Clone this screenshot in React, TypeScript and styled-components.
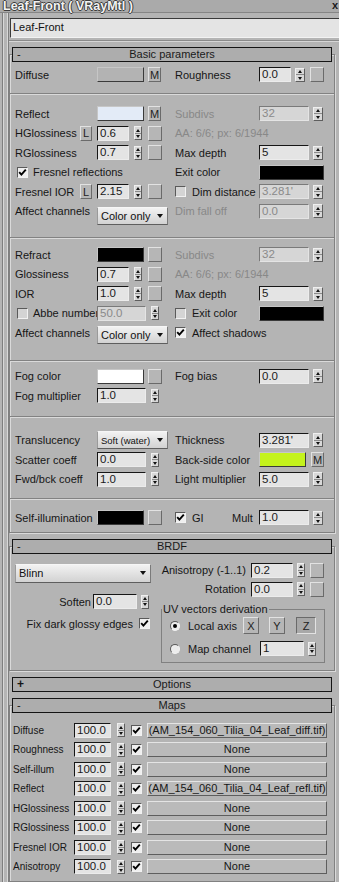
import React from "react";
import styled, { createGlobalStyle } from "styled-components";

const GlobalStyle = createGlobalStyle`
  html, body { margin: 0; padding: 0; background: #b4b4b4; }
`;

const Window = styled.div`
  width: 339px;
  height: 882px;
  overflow: hidden;
  background: #b4b4b4;
  display: flex;
  flex-direction: column;
  font-family: "Liberation Sans", Arial, sans-serif;
  font-size: 11px;
  color: #161616;
`;

const TitleBar = styled.div`
  height: 12px;
  flex-shrink: 0;
  display: flex;
  align-items: flex-start;
  justify-content: space-between;
  padding: 0 1px 0 3px;
  background: #aaaaaa;
  border-bottom: 1px solid #858585;
`;

const Title = styled.span`
  font-weight: bold;
  font-size: 12.5px;
  line-height: 12px;
  color: #f2f2f2;
  white-space: nowrap;
  text-shadow: -1px 0 #3c3c3c, 1px 0 #3c3c3c, 0 -1px #3c3c3c, 0 1px #3c3c3c;
`;

const Close = styled.span`
  font-weight: bold;
  font-size: 11px;
  line-height: 11px;
  color: #1a1a1a;
`;

const Frame = styled.div`
  flex: 1;
  display: flex;
  min-height: 0;
`;

const Rail = styled.div`
  width: 5px;
  margin-left: 2px;
  flex-shrink: 0;
  border-left: 1px solid #7e7e7e;
  border-right: 1px solid #7e7e7e;
  box-shadow: inset 1px 0 #d8d8d8, inset -1px 0 #d8d8d8;
`;

const Main = styled.div`
  flex: 1;
  min-width: 0;
  display: flex;
  flex-direction: column;
`;

const NameBar = styled.div`
  padding: 5px 0 2px 1px;
  border-bottom: 1px solid #8a8a8a;
  box-shadow: 0 1px 0 #d6d6d6;
`;

const NameField = styled.div`
  height: 20px;
  box-sizing: border-box;
  background: #e4e4e4;
  border-top: 1px solid #3a3a3a;
  border-left: 1px solid #3a3a3a;
  border-bottom: 1px solid #f2f2f2;
  padding: 1px 0 0 2px;
  line-height: 14px;
  font-size: 11px;
  color: #111;
`;

const Rollouts = styled.div`
  padding-top: 6px;
`;

const Rollout = styled.div`
  width: 326px;
  margin-bottom: 6px;
`;

const RolloutHeader = styled.div`
  position: relative;
  z-index: 1;
  margin: 0 3px;
  height: 15px;
  box-sizing: border-box;
  border: 1px solid #141414;
  background: #adadad;
  display: flex;
  align-items: center;
`;

const HeaderSign = styled.span<{ $bold?: boolean }>`
  width: 14px;
  padding-left: 4px;
  box-sizing: border-box;
  line-height: 13px;
  font-weight: ${(p) => (p.$bold ? "bold" : "normal")};
  font-size: ${(p) => (p.$bold ? 12 : 11)}px;
`;

const HeaderTitle = styled.span`
  flex: 1;
  padding-right: 14px;
  text-align: center;
  line-height: 13px;
  color: #1a1a1a;
`;

const RolloutBody = styled.div`
  margin-top: -8px;
  padding-top: 7px;
  border: 1px solid #818181;
  box-shadow: inset 1px 1px 0 #dadada, 1px 1px 0 #dadada;
`;

const Section = styled.div<{ $pt: number; $pb: number }>`
  padding: ${(p) => p.$pt}px 0 ${(p) => p.$pb}px 5px;
`;

const Separator = styled.div`
  height: 2px;
  box-sizing: border-box;
  border-top: 1px solid #828282;
  border-bottom: 1px solid #dadada;
`;

const Row = styled.div<{ $h?: number }>`
  display: flex;
  align-items: center;
  height: ${(p) => p.$h ?? 19.5}px;
`;

const Left = styled.div`
  width: 160px;
  flex-shrink: 0;
  display: flex;
  align-items: center;
`;

const Right = styled.div`
  flex: 1;
  display: flex;
  align-items: center;
`;

const Label = styled.span<{ $w?: number; $dim?: boolean; $ml?: number; $fs?: number }>`
  ${(p) => (p.$w ? `width: ${p.$w}px;` : "")}
  flex-shrink: 0;
  margin-left: ${(p) => p.$ml ?? 0}px;
  white-space: nowrap;
  font-size: ${(p) => p.$fs ?? 11}px;
  color: ${(p) => (p.$dim ? "#888888" : "#161616")};
`;

const Swatch = styled.span<{ $w: number; $color: string; $ml?: number }>`
  width: ${(p) => p.$w}px;
  height: 15px;
  box-sizing: border-box;
  flex-shrink: 0;
  margin-left: ${(p) => p.$ml ?? 0}px;
  background: ${(p) => p.$color};
  border: 1px solid;
  border-color: #c6c6c6 #3a3a3a #3a3a3a #c6c6c6;
`;

const Btn = styled.span<{ $w: number; $h?: number; $ml?: number; $pressed?: boolean }>`
  width: ${(p) => p.$w}px;
  height: ${(p) => p.$h ?? 15}px;
  box-sizing: border-box;
  flex-shrink: 0;
  margin-left: ${(p) => p.$ml ?? 0}px;
  display: flex;
  align-items: center;
  justify-content: center;
  font-size: 11px;
  color: #222;
  background: ${(p) => (p.$pressed ? "#a8a8a8" : "#b6b6b6")};
  border: 1px solid;
  border-color: ${(p) =>
    p.$pressed ? "#6a6a6a #e2e2e2 #e2e2e2 #6a6a6a" : "#e2e2e2 #6a6a6a #6a6a6a #e2e2e2"};
`;

const Input = styled.span<{ $w: number; $dim?: boolean; $ml?: number }>`
  width: ${(p) => p.$w}px;
  height: 15px;
  box-sizing: border-box;
  flex-shrink: 0;
  margin-left: ${(p) => p.$ml ?? 0}px;
  padding-left: 2px;
  line-height: 13px;
  font-size: 11.5px;
  white-space: nowrap;
  overflow: hidden;
  background: ${(p) => (p.$dim ? "#d6d6d6" : "#e4e4e4")};
  color: ${(p) => (p.$dim ? "#8a8a8a" : "#1a1a1a")};
  border: 1px solid;
  border-color: ${(p) =>
    p.$dim ? "#7a7a7a #e4e4e4 #e4e4e4 #7a7a7a" : "#161616 #ececec #ececec #161616"};
`;

const Spinner = styled.span<{ $w: number; $ml: number }>`
  width: ${(p) => p.$w}px;
  height: 14px;
  box-sizing: border-box;
  flex-shrink: 0;
  margin-left: ${(p) => p.$ml}px;
  display: flex;
  flex-direction: column;
  background: #d8d8d8;
  border: 1px solid;
  border-color: #efefef #5e5e5e #5e5e5e #efefef;
`;

const SpinHalf = styled.span<{ $down?: boolean }>`
  flex: 1;
  display: flex;
  align-items: center;
  justify-content: center;
  ${(p) => (p.$down ? "border-top: 1px solid #8a8a8a;" : "")}
  &::after {
    content: "";
    border-left: 2.5px solid transparent;
    border-right: 2.5px solid transparent;
    ${(p) => (p.$down ? "border-top: 3px solid #111;" : "border-bottom: 3px solid #111;")}
  }
`;

const CheckBox = styled.span<{ $on?: boolean; $ml?: number }>`
  width: 11px;
  height: 11px;
  box-sizing: border-box;
  flex-shrink: 0;
  margin-left: ${(p) => p.$ml ?? 0}px;
  display: flex;
  align-items: center;
  justify-content: center;
  background: ${(p) => (p.$on ? "#efefef" : "#d4d4d4")};
  border: 1px solid;
  border-color: #5a5a5a #f2f2f2 #f2f2f2 #5a5a5a;
`;

const RadioDot = styled.span<{ $on?: boolean }>`
  width: 10px;
  height: 10px;
  box-sizing: border-box;
  flex-shrink: 0;
  margin-left: 8px;
  border-radius: 50%;
  display: flex;
  align-items: center;
  justify-content: center;
  background: #ececec;
  border: 1px solid;
  border-color: #5a5a5a #f2f2f2 #f2f2f2 #5a5a5a;
  &::after {
    content: "";
    width: 4px;
    height: 4px;
    border-radius: 50%;
    background: ${(p) => (p.$on ? "#000" : "transparent")};
  }
`;

const Dropdown = styled.span<{ $w: number; $h: number; $fs?: number; $mt?: number }>`
  width: ${(p) => p.$w}px;
  height: ${(p) => p.$h}px;
  box-sizing: border-box;
  flex-shrink: 0;
  margin-top: ${(p) => p.$mt ?? 0}px;
  display: flex;
  align-items: center;
  justify-content: space-between;
  padding: 0 4px 0 3px;
  font-size: ${(p) => p.$fs ?? 11}px;
  color: #111;
  background: linear-gradient(#f2f2f2, #d2d2d2);
  border: 1px solid;
  border-color: #f6f6f6 #7a7a7a #5e5e5e #9a9a9a;
  white-space: nowrap;
  &::after {
    content: "";
    border-left: 3.5px solid transparent;
    border-right: 3.5px solid transparent;
    border-top: 4px solid #111;
  }
`;

const BrdfGrid = styled.div`
  display: flex;
  padding: 0 0 7px 5px;
`;

const Column = styled.div<{ $w: number; $ml?: number }>`
  width: ${(p) => p.$w}px;
  margin-left: ${(p) => p.$ml ?? 0}px;
  flex-shrink: 0;
  display: flex;
  flex-direction: column;
`;

const EndRow = styled.div<{ $h: number; $mt: number; $pr: number }>`
  height: ${(p) => p.$h}px;
  margin-top: ${(p) => p.$mt}px;
  padding-right: ${(p) => p.$pr}px;
  display: flex;
  align-items: center;
  justify-content: flex-end;
`;

const Group = styled.fieldset`
  margin: 6px 0 0 1px;
  padding: 0 0 4px 0;
  width: 164px;
  box-sizing: border-box;
  border: 1px solid #808080;
`;

const Legend = styled.legend`
  padding: 0 1px;
  margin-left: 0;
  font-size: 11px;
  line-height: 13px;
  color: #161616;
`;

const GroupRow = styled.div<{ $mt: number }>`
  height: 18px;
  margin-top: ${(p) => p.$mt}px;
  display: flex;
  align-items: center;
`;

const MapRow = styled.div`
  height: 19.5px;
  display: flex;
  align-items: center;
`;

const MapButton = styled.span`
  width: 180px;
  height: 15px;
  box-sizing: border-box;
  flex-shrink: 0;
  margin-left: 5px;
  text-align: center;
  line-height: 13px;
  font-size: 11px;
  white-space: nowrap;
  overflow: hidden;
  color: #161616;
  background: #bababa;
  border: 1px solid;
  border-color: #e4e4e4 #5e5e5e #5e5e5e #e4e4e4;
`;

const Spin = ({ w = 8, ml = 5 }: { w?: number; ml?: number }) => (
  <Spinner $w={w} $ml={ml}>
    <SpinHalf />
    <SpinHalf $down />
  </Spinner>
);

const Tick = () => (
  <svg width="9" height="9" viewBox="0 0 9 9">
    <path d="M1.2 4.2 L3.4 6.6 L7.8 1.6" fill="none" stroke="#000" strokeWidth="1.9" />
  </svg>
);

const Check = ({ on, ml }: { on?: boolean; ml?: number }) => (
  <CheckBox $on={on} $ml={ml}>{on && <Tick />}</CheckBox>
);

const Header = ({ sign, title }: { sign: string; title: string }) => (
  <RolloutHeader>
    <HeaderSign $bold={sign === "+"}>{sign}</HeaderSign>
    <HeaderTitle>{title}</HeaderTitle>
  </RolloutHeader>
);

const maps = [
  { name: "Diffuse", slot: "(AM_154_060_Tilia_04_Leaf_diff.tif)" },
  { name: "Roughness", slot: "None" },
  { name: "Self-illum", slot: "None" },
  { name: "Reflect", slot: "(AM_154_060_Tilia_04_Leaf_refl.tif)" },
  { name: "HGlossiness", slot: "None" },
  { name: "RGlossiness", slot: "None" },
  { name: "Fresnel IOR", slot: "None" },
  { name: "Anisotropy", slot: "None" },
];

export default function App() {
  return (
    <Window>
      <GlobalStyle />
      <TitleBar>
        <Title>Leaf-Front ( VRayMtl )</Title>
        <Close>x</Close>
      </TitleBar>
      <Frame>
        <Rail />
        <Main>
          <NameBar>
            <NameField>Leaf-Front</NameField>
          </NameBar>
          <Rollouts>
            <Rollout>
              <Header sign="-" title="Basic parameters" />
              <RolloutBody>
                <Section $pt={3} $pb={8.5}>
                  <Row>
                    <Left>
                      <Label $w={82}>Diffuse</Label>
                      <Swatch $w={47} $color="#b3b3b3" />
                      <Btn $w={13} $ml={4}>M</Btn>
                    </Left>
                    <Right>
                      <Label $w={84}>Roughness</Label>
                      <Input $w={32}>0.0</Input>
                      <Spin w={10} ml={4} />
                      <Btn $w={14} $ml={5} />
                    </Right>
                  </Row>
                </Section>
                <Separator />
                <Section $pt={9} $pb={16}>
                  <Row>
                    <Left>
                      <Label $w={82}>Reflect</Label>
                      <Swatch $w={47} $color="#e3ebf7" />
                      <Btn $w={13} $ml={4}>M</Btn>
                    </Left>
                    <Right>
                      <Label $w={84} $dim>Subdivs</Label>
                      <Input $w={50} $dim>32</Input>
                      <Spin w={10} ml={4} />
                    </Right>
                  </Row>
                  <Row>
                    <Left>
                      <Label $w={65}>HGlossiness</Label>
                      <Btn $w={12}>L</Btn>
                      <Input $w={32} $ml={5}>0.6</Input>
                      <Spin />
                      <Btn $w={14} $ml={6} />
                    </Left>
                    <Right>
                      <Label $dim>AA: 6/6; px: 6/1944</Label>
                    </Right>
                  </Row>
                  <Row>
                    <Left>
                      <Label $w={82}>RGlossiness</Label>
                      <Input $w={32}>0.7</Input>
                      <Spin />
                      <Btn $w={14} $ml={6} />
                    </Left>
                    <Right>
                      <Label $w={84}>Max depth</Label>
                      <Input $w={50}>5</Input>
                      <Spin w={10} ml={4} />
                    </Right>
                  </Row>
                  <Row>
                    <Left>
                      <Check on ml={2} />
                      <Label $ml={5}>Fresnel reflections</Label>
                    </Left>
                    <Right>
                      <Label $w={84}>Exit color</Label>
                      <Swatch $w={65} $color="#000" />
                    </Right>
                  </Row>
                  <Row>
                    <Left>
                      <Label $w={65}>Fresnel IOR</Label>
                      <Btn $w={12}>L</Btn>
                      <Input $w={32} $ml={5}>2.15</Input>
                      <Spin />
                      <Btn $w={14} $ml={6} />
                    </Left>
                    <Right>
                      <Check />
                      <Label $w={67} $ml={6}>Dim distance</Label>
                      <Input $w={50} $dim>3.281'</Input>
                      <Spin w={10} ml={4} />
                    </Right>
                  </Row>
                  <Row>
                    <Left>
                      <Label $w={82}>Affect channels</Label>
                      <Dropdown $w={71} $h={18} $mt={9}>Color only</Dropdown>
                    </Left>
                    <Right>
                      <Label $w={84} $dim>Dim fall off</Label>
                      <Input $w={50} $dim>0.0</Input>
                      <Spin w={10} ml={4} />
                    </Right>
                  </Row>
                </Section>
                <Separator />
                <Section $pt={6} $pb={17}>
                  <Row>
                    <Left>
                      <Label $w={82}>Refract</Label>
                      <Swatch $w={47} $color="#000" />
                      <Btn $w={14} $ml={4} />
                    </Left>
                    <Right>
                      <Label $w={84} $dim>Subdivs</Label>
                      <Input $w={50} $dim>32</Input>
                      <Spin w={10} ml={4} />
                    </Right>
                  </Row>
                  <Row>
                    <Left>
                      <Label $w={82}>Glossiness</Label>
                      <Input $w={32}>0.7</Input>
                      <Spin />
                      <Btn $w={14} $ml={6} />
                    </Left>
                    <Right>
                      <Label $dim>AA: 6/6; px: 6/1944</Label>
                    </Right>
                  </Row>
                  <Row>
                    <Left>
                      <Label $w={82}>IOR</Label>
                      <Input $w={32}>1.0</Input>
                      <Spin />
                      <Btn $w={14} $ml={6} />
                    </Left>
                    <Right>
                      <Label $w={84}>Max depth</Label>
                      <Input $w={50}>5</Input>
                      <Spin w={10} ml={4} />
                    </Right>
                  </Row>
                  <Row>
                    <Left>
                      <Check ml={2} />
                      <Label $w={64} $ml={5}>Abbe number</Label>
                      <Input $w={49} $dim>50.0</Input>
                      <Spin />
                    </Left>
                    <Right>
                      <Check />
                      <Label $w={67} $ml={6}>Exit color</Label>
                      <Swatch $w={65} $color="#000" />
                    </Right>
                  </Row>
                  <Row>
                    <Left>
                      <Label $w={82}>Affect channels</Label>
                      <Dropdown $w={71} $h={18} $mt={4}>Color only</Dropdown>
                    </Left>
                    <Right>
                      <Check on />
                      <Label $ml={6}>Affect shadows</Label>
                    </Right>
                  </Row>
                </Section>
                <Separator />
                <Section $pt={5} $pb={10}>
                  <Row>
                    <Left>
                      <Label $w={82}>Fog color</Label>
                      <Swatch $w={47} $color="#ffffff" />
                      <Btn $w={14} $ml={4} />
                    </Left>
                    <Right>
                      <Label $w={84}>Fog bias</Label>
                      <Input $w={50}>0.0</Input>
                      <Spin w={10} ml={4} />
                    </Right>
                  </Row>
                  <Row>
                    <Left>
                      <Label $w={82}>Fog multiplier</Label>
                      <Input $w={49}>1.0</Input>
                      <Spin />
                    </Left>
                  </Row>
                </Section>
                <Separator />
                <Section $pt={13} $pb={9}>
                  <Row>
                    <Left>
                      <Label $w={82}>Translucency</Label>
                      <Dropdown $w={71} $h={18} $fs={9.5}>Soft (water)</Dropdown>
                    </Left>
                    <Right>
                      <Label $w={84}>Thickness</Label>
                      <Input $w={50}>3.281'</Input>
                      <Spin w={10} ml={4} />
                    </Right>
                  </Row>
                  <Row>
                    <Left>
                      <Label $w={82}>Scatter coeff</Label>
                      <Input $w={49}>0.0</Input>
                      <Spin />
                    </Left>
                    <Right>
                      <Label $w={84}>Back-side color</Label>
                      <Swatch $w={47} $color="#c4f21c" />
                      <Btn $w={13} $ml={5}>M</Btn>
                    </Right>
                  </Row>
                  <Row>
                    <Left>
                      <Label $w={82}>Fwd/bck coeff</Label>
                      <Input $w={49}>1.0</Input>
                      <Spin />
                    </Left>
                    <Right>
                      <Label $w={84}>Light multiplier</Label>
                      <Input $w={50}>5.0</Input>
                      <Spin w={10} ml={4} />
                    </Right>
                  </Row>
                </Section>
                <Separator />
                <Section $pt={8} $pb={4}>
                  <Row>
                    <Left>
                      <Label $w={82}>Self-illumination</Label>
                      <Swatch $w={47} $color="#000" />
                      <Btn $w={14} $ml={4} />
                    </Left>
                    <Right>
                      <Check on />
                      <Label $w={40} $ml={6}>GI</Label>
                      <Label $w={27}>Mult</Label>
                      <Input $w={50}>1.0</Input>
                      <Spin w={10} ml={4} />
                    </Right>
                  </Row>
                </Section>
              </RolloutBody>
            </Rollout>

            <Rollout>
              <Header sign="-" title="BRDF" />
              <RolloutBody>
                <BrdfGrid>
                  <Column $w={137}>
                    <Dropdown $w={136} $h={19} $mt={10}>Blinn</Dropdown>
                    <EndRow $h={18} $mt={10} $pr={3}>
                      <Label>Soften</Label>
                      <Input $w={44} $ml={2}>0.0</Input>
                      <Spin ml={4} />
                    </EndRow>
                    <EndRow $h={18} $mt={4} $pr={2}>
                      <Label>Fix dark glossy edges</Label>
                      <Check on ml={6} />
                    </EndRow>
                  </Column>
                  <Column $w={165} $ml={8}>
                    <EndRow $h={15} $mt={9} $pr={1}>
                      <Label>Anisotropy (-1..1)</Label>
                      <Input $w={42} $ml={5}>0.2</Input>
                      <Spin ml={4} />
                      <Btn $w={14} $ml={5} />
                    </EndRow>
                    <EndRow $h={15} $mt={4} $pr={1}>
                      <Label>Rotation</Label>
                      <Input $w={42} $ml={5}>0.0</Input>
                      <Spin ml={4} />
                      <Btn $w={14} $ml={5} />
                    </EndRow>
                    <Group>
                      <Legend>UV vectors derivation</Legend>
                      <GroupRow $mt={1}>
                        <RadioDot $on />
                        <Label $w={55} $ml={8}>Local axis</Label>
                        <Btn $w={16} $h={17}>X</Btn>
                        <Btn $w={16} $h={17} $ml={10}>Y</Btn>
                        <Btn $w={20} $h={17} $ml={11} $pressed>Z</Btn>
                      </GroupRow>
                      <GroupRow $mt={5}>
                        <RadioDot />
                        <Label $w={72} $ml={8}>Map channel</Label>
                        <Input $w={44}>1</Input>
                        <Spin ml={4} />
                      </GroupRow>
                    </Group>
                  </Column>
                </BrdfGrid>
              </RolloutBody>
            </Rollout>

            <Rollout>
              <Header sign="+" title="Options" />
            </Rollout>

            <Rollout>
              <Header sign="-" title="Maps" />
              <RolloutBody>
                <Section $pt={8} $pb={4}>
                  {maps.map((m) => (
                    <MapRow key={m.name}>
                      <Label $w={58} $ml={-2} $fs={10}>{m.name}</Label>
                      <Input $w={37} $ml={3}>100.0</Input>
                      <Spin ml={6} />
                      <Check on ml={6} />
                      <MapButton>{m.slot}</MapButton>
                    </MapRow>
                  ))}
                </Section>
              </RolloutBody>
            </Rollout>
          </Rollouts>
        </Main>
      </Frame>
    </Window>
  );
}
